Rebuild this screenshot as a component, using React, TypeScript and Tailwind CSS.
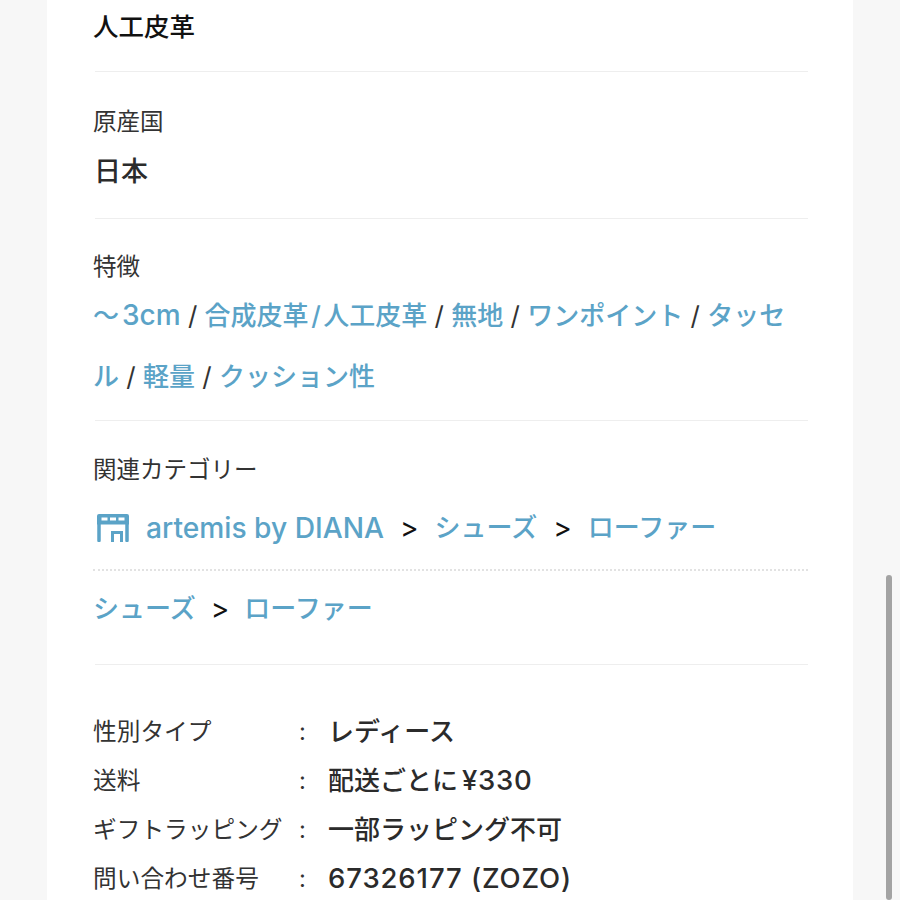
function Link({ children }: { children: React.ReactNode }) {
  return <span className="font-medium text-[#5ba3c7]">{children}</span>;
}

function Sep({ tight }: { tight?: boolean }) {
  return (
    <span className={tight ? "mx-[15px] text-[28px] font-normal leading-[38px] text-[#111111]" : "mx-[16px] text-[28px] font-normal leading-[38px] text-[#111111]"}>
      &gt;
    </span>
  );
}

function Divider() {
  return <div className="ml-[2px] h-px bg-[#eeeeee]" />;
}

function Row({ label, value }: { label: string; value: React.ReactNode }) {
  return (
    <div className="flex h-[49px] items-center">
      <div className="w-[206px] shrink-0 text-[23.7px] text-[#333333]">{label}</div>
      <div className="w-[29px] shrink-0 text-[23.7px] text-[#333333]">:</div>
      <div className="text-[26px] font-medium text-[#2b2b2b]">{value}</div>
    </div>
  );
}

export default function App() {
  return (
    <div className="relative h-[900px] w-[900px] overflow-hidden bg-[#f7f7f7] font-['Inter','Noto_Sans_CJK_JP',sans-serif]">
      <div className="mx-auto h-[900px] w-[806px] bg-white pl-[46px] pr-[45px]">
        <div className="flex h-[71px] items-start pt-[8px] text-[25.5px] font-medium leading-[38px] text-[#111111]">人工皮革</div>
        <Divider />

        <div className="h-[146px] pt-[32px]">
          <div className="text-[23.5px] leading-[36px] text-[#333333]">原産国</div>
          <div className="mt-[13px] pl-[1px] text-[27px] font-medium leading-[38px] text-[#2b2b2b]">日本</div>
        </div>
        <Divider />

        <div className="h-[201px] pt-[30px]">
          <div className="text-[23.5px] leading-[36px] text-[#333333]">特徴</div>
          <div className="text-[26px] leading-[61px] text-[#333333]">
            <Link><span className="mr-[3px]">～</span><span className="text-[28px]">3cm</span></Link> / <Link>合成皮革<span className="mx-[2.5px]">/</span>人工皮革</Link> / <Link>無地</Link> / <Link>ワンポイント</Link> / <Link>タッセル</Link> / <Link>軽量</Link> / <Link>クッション性</Link>
          </div>
        </div>
        <Divider />

        <div className="h-[243px] pt-[31px]">
          <div className="text-[23.5px] leading-[36px] text-[#333333]">関連カテゴリー</div>
          <div className="mt-[21px] flex h-[38px] items-center text-[26px] leading-[38px]">
            <svg width="32" height="28" viewBox="0 0 32 28" className="ml-[4px] mr-[17px] shrink-0" fill="none">
              <path fillRule="evenodd" fill="#5ba3c7" d="M2 0h28a2 2 0 0 1 2 2v8.500h-32V2a2 2 0 0 1 2-2zM4.500 3.500v3h6v-3zM13 3.500v3h6v-3zM21.500 3.500v3h6v-3z" />
              <path d="M2 9v17.500M30 9v17.500" stroke="#5ba3c7" strokeWidth="3.500" strokeLinecap="round" />
              <path d="M15.500 28V18.500h9V28" stroke="#5ba3c7" strokeWidth="3" />
              <path d="M20 20v8" stroke="#ffffff" strokeWidth="1" />
            </svg>
            <Link><span className="text-[28.2px]">artemis by DIANA</span></Link>
            <Sep />
            <Link>シューズ</Link>
            <Sep />
            <Link>ローファー</Link>
          </div>
          <div className="mt-[22px] border-t-2 border-dotted border-[#e2e2e2]" />
          <div className="mt-[19px] flex h-[38px] items-center text-[26px] leading-[38px]">
            <Link>シューズ</Link>
            <Sep tight />
            <Link>ローファー</Link>
          </div>
        </div>
        <Divider />

        <div className="pt-[42px]">
          <Row label="性別タイプ" value="レディース" />
          <Row label="送料" value={<>配送ごとに<span className="-ml-[4px] text-[27.5px] tracking-[0.7px]"> ¥330</span></>} />
          <Row label="ギフトラッピング" value="一部ラッピング不可" />
          <Row label="問い合わせ番号" value={<span className="text-[27.5px] tracking-[0.9px]">67326177 (ZOZO)</span>} />
        </div>
      </div>
      <div className="absolute right-[8px] top-[575px] h-[325px] w-[6px] rounded-full bg-[#a3a3a3]" />
    </div>
  );
}
